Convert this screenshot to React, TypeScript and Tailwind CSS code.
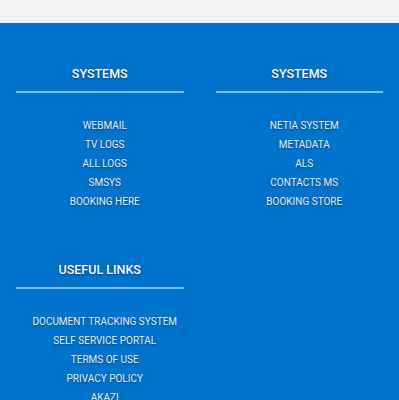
const sections = [
  {
    title: 'SYSTEMS',
    links: ['WEBMAIL', 'TV LOGS', 'ALL LOGS', 'SMSYS', 'BOOKING HERE'],
  },
  {
    title: 'SYSTEMS',
    links: ['NETIA SYSTEM', 'METADATA', 'ALS', 'CONTACTS MS', 'BOOKING STORE'],
  },
  {
    title: 'USEFUL LINKS',
    links: [
      'DOCUMENT TRACKING SYSTEM',
      'SELF SERVICE PORTAL',
      'TERMS OF USE',
      'PRIVACY POLICY',
      'AKAZI',
    ],
  },
];

export default function App() {
  return (
    <div className="min-h-screen bg-[#f2f2f2] font-['Roboto',sans-serif]">
      <div className="h-[23px]"></div>
      <footer className="bg-[#0073cd] pt-[42px] pb-10">
        <div className="grid grid-cols-2 gap-y-[50px]">
          {sections.map((s, i) => (
            <div key={i} className="px-4 text-center">
              <h3 className="text-[12.5px] leading-[18px] font-medium text-white [text-shadow:0_1px_2px_rgba(0,0,0,0.55)]">
                {s.title}
              </h3>
              <div className="mt-[8px] h-[2px] bg-[#7fc1f5]"></div>
              <ul className="mt-[23px] pl-[10px]">
                {s.links.map((l) => (
                  <li
                    key={l}
                    className="text-[10px] leading-[19px] text-[#e8f2fb] whitespace-nowrap [text-shadow:0_1px_2px_rgba(0,0,0,0.5)]"
                  >
                    <a href="#">{l}</a>
                  </li>
                ))}
              </ul>
            </div>
          ))}
        </div>
      </footer>
    </div>
  );
}
